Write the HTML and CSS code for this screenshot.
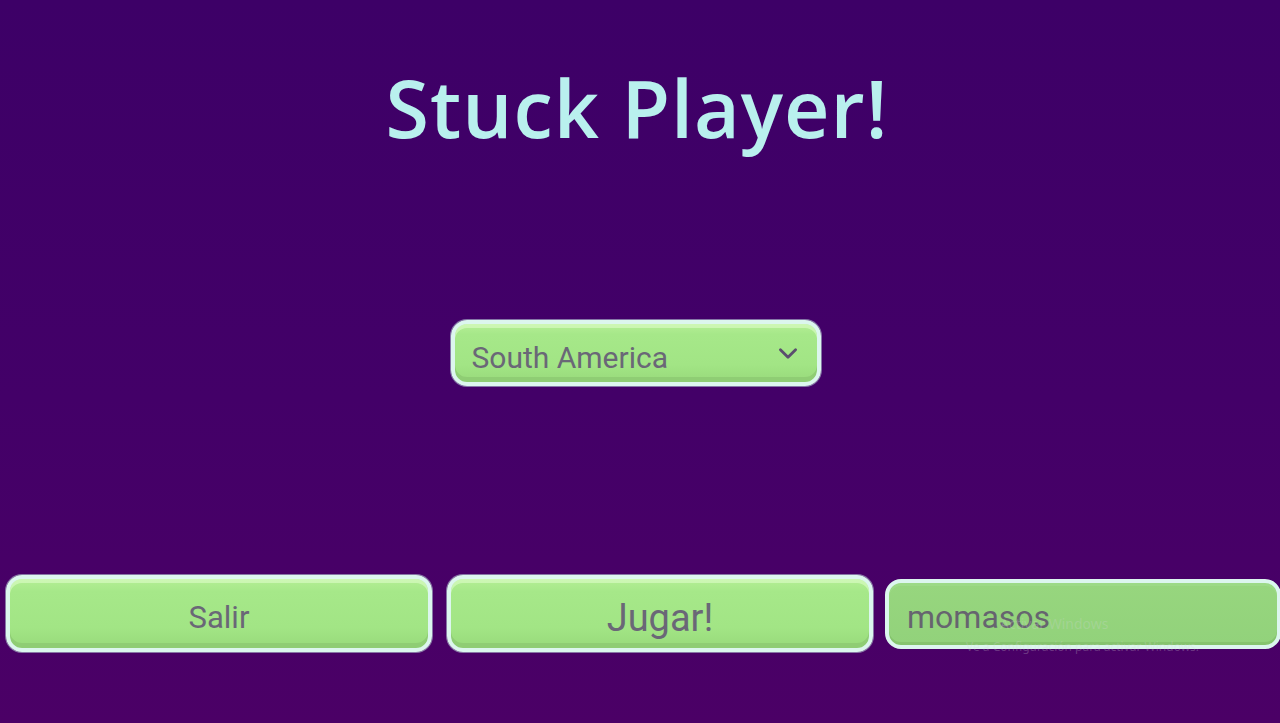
FILE: index.html
```html
<!DOCTYPE html>
<html lang="es">
<head>
<meta charset="utf-8">
<title>Stuck Player!</title>
<link rel="stylesheet" href="styles.css">
</head>
<body>
<main class="screen">
  <h1 class="title">Stuck Player!</h1>

  <div class="region">
    <div class="pill select">
      <span class="select-label">South America</span>
      <svg class="chevron" viewBox="0 0 24 24" width="26" height="26" aria-hidden="true">
        <path d="M5 9 L12 16 L19 9" fill="none" stroke="#5b4d6e" stroke-width="2.6" stroke-linecap="round" stroke-linejoin="round"/>
      </svg>
    </div>
  </div>

  <div class="actions">
    <button class="pill btn btn-exit">Salir</button>
    <button class="pill btn btn-play">Jugar!</button>
    <div class="pill field"><span class="field-text">momasos</span></div>
  </div>
</main>

<div class="activation">
  <div class="activation-title">Activar Windows</div>
  <div class="activation-sub">Ve a Configuración para activar Windows.</div>
</div>
</body>
</html>
```

FILE: styles.css
```css
html, body {
  margin: 0;
  padding: 0;
  height: 100%;
}

body {
  background: linear-gradient(180deg, #3d0067 0%, #430068 55%, #4b0066 100%);
  font-family: Roboto, "Noto Sans", sans-serif;
  overflow: hidden;
}

.screen {
  height: 723px;
  box-sizing: border-box;
  padding-top: 56px;
  display: flex;
  flex-direction: column;
}

.title {
  margin: 0;
  height: 104px;
  line-height: 104px;
  text-align: center;
  font-family: "Open Sans", "DejaVu Sans", sans-serif;
  font-weight: 600;
  font-size: 79px;
  color: #b9f0ee;
  letter-spacing: 1px;
  padding-right: 6px;
}

.region {
  margin-top: 160px;
  display: flex;
  justify-content: center;
  padding-right: 9px;
}

/* glossy green pill with a pale outline */
.pill {
  box-sizing: border-box;
  border: 4px solid #dcf6ee;
  border-radius: 16px;
  background: linear-gradient(180deg, #b4ee95 0%, #a6e889 18%, #a2e585 70%, #98da7b 100%);
  box-shadow:
    inset 0 -5px 0 #8fcd74,
    inset 0 4px 0 rgba(226, 255, 205, 0.55),
    0 0 0 1px rgba(200, 240, 230, 0.5);
  color: #6a6777;
}

.select {
  width: 370px;
  height: 66px;
  display: flex;
  align-items: center;
  justify-content: space-between;
  padding: 8px 16px 0 17px;
}

.select-label {
  font-size: 30px;
}

.chevron {
  margin-top: -8px;
}

.actions {
  margin-top: 189px;
  display: grid;
  grid-template-columns: 426px 426px 393px;
  column-gap: 15px;
  align-items: center;
  padding: 0 2px 0 6px;
}

.btn {
  height: 77px;
  font-family: Roboto, "Noto Sans", sans-serif;
  padding: 8px 0 0;
  cursor: pointer;
}

.btn-exit {
  font-size: 31px;
}

.btn-play {
  font-size: 38px;
}

.actions .field {
  margin-left: -3px;
  height: 70px;
  display: flex;
  align-items: center;
  padding: 6px 18px 0;
  border-width: 4px;
  background: linear-gradient(180deg, #97d67e 0%, #92d27b 100%);
  box-shadow:
    inset 0 -3px 0 #86c46e,
    inset 0 3px 0 rgba(160, 220, 140, 0.6);
}

.field-text {
  font-size: 32px;
  color: #66646f;
}

/* desktop activation notice drawn over the corner */
.activation {
  position: absolute;
  left: 966px;
  top: 614px;
  color: rgba(210, 215, 215, 0.26);
  font-family: "Noto Sans", sans-serif;
  pointer-events: none;
}

.activation-title {
  font-size: 14px;
  padding-left: 34px;
}

.activation-sub {
  font-size: 12px;
  margin-top: 5px;
}
```
